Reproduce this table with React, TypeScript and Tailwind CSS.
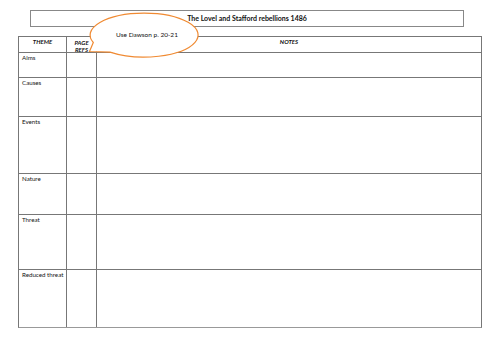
const rows = [
  { label: "Aims", h: "h-[25px]" },
  { label: "Causes", h: "h-[39px]" },
  { label: "Events", h: "h-[57px]" },
  { label: "Nature", h: "h-[41px]" },
  { label: "Threat", h: "h-[55px]" },
  { label: "Reduced threat", h: "h-[57px]" },
];

function Callout() {
  return (
    <div className="absolute left-[84px] top-[10px] w-[120px] h-[50px]">
      <svg width="120" height="50" viewBox="0 0 120 50" className="absolute inset-0">
        <path
          d="M9.3 32.5 L5.5 41.5 L26 42.1 A54 22 0 1 0 9.3 32.5 Z"
          fill="#fff"
          stroke="#f08a32"
          strokeWidth="1.2"
          strokeLinejoin="miter"
        />
      </svg>
      <div className="absolute left-[6px] right-0 top-[22px] flex justify-center">
        <span className="text-[6.5px] leading-none text-[#111]">Use Dawson p. 20-21</span>
      </div>
    </div>
  );
}

export default function App() {
  return (
    <div className="relative w-[500px] h-[353px] bg-white pt-[10px] font-['Lato','Liberation_Sans',sans-serif] text-[#111]">
      <div className="ml-[30px] w-[434px] h-[17px] border border-[#888] flex items-center justify-center">
        <span className="text-[7px] font-bold leading-none">The Lovel and Stafford rebellions 1486</span>
      </div>
      <div className="ml-[18px] mt-[9px] w-[464px] border border-[#777] border-b-[#999]">
        <div className="grid grid-cols-[48px_30px_1fr] h-[16px] border-b border-[#777]">
          <div className="border-r border-[#777] flex justify-center pt-[2px]">
            <span className="text-[6px] font-bold italic leading-none">THEME</span>
          </div>
          <div className="border-r border-[#777] flex flex-col items-center pt-[2px]">
            <span className="text-[6px] font-bold italic leading-[7px]">PAGE</span>
            <span className="text-[6px] font-bold italic leading-[7px]">REFS</span>
          </div>
          <div className="flex justify-center pt-[2px]">
            <span className="text-[6px] font-bold italic leading-none">NOTES</span>
          </div>
        </div>
        {rows.map((r, i) => (
          <div
            key={r.label}
            className={`grid grid-cols-[48px_30px_1fr] ${r.h} ${i < rows.length - 1 ? "border-b border-[#777]" : ""}`}
          >
            <div className="border-r border-[#777] pl-[3px] pt-[2px]">
              <span className="text-[6.2px] leading-none block whitespace-nowrap">{r.label}</span>
            </div>
            <div className="border-r border-[#777]" />
            <div />
          </div>
        ))}
      </div>
      <Callout />
    </div>
  );
}
